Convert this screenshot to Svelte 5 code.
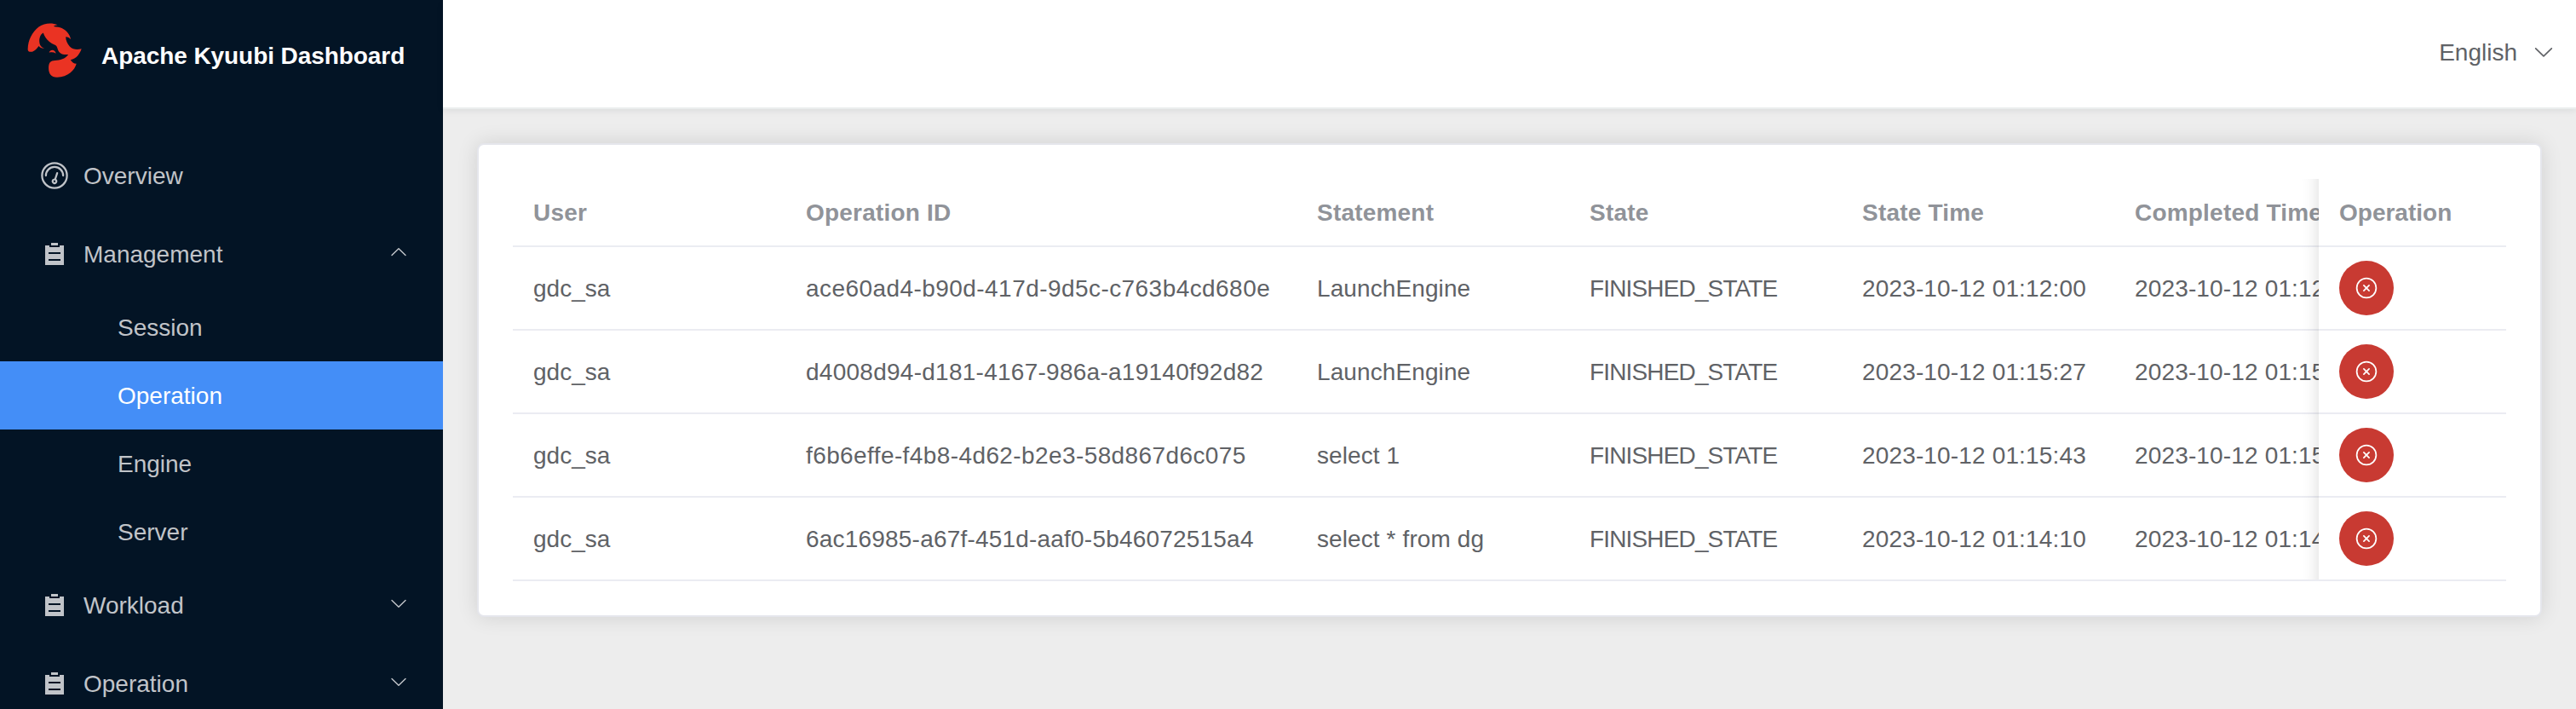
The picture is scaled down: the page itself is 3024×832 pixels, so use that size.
<script>
  const rows = [
    { user: 'gdc_sa', id: 'ace60ad4-b90d-417d-9d5c-c763b4cd680e', statement: 'LaunchEngine', state: 'FINISHED_STATE', stateTime: '2023-10-12 01:12:00', completed: '2023-10-12 01:12:00' },
    { user: 'gdc_sa', id: 'd4008d94-d181-4167-986a-a19140f92d82', statement: 'LaunchEngine', state: 'FINISHED_STATE', stateTime: '2023-10-12 01:15:27', completed: '2023-10-12 01:15:27' },
    { user: 'gdc_sa', id: 'f6b6effe-f4b8-4d62-b2e3-58d867d6c075', statement: 'select 1', state: 'FINISHED_STATE', stateTime: '2023-10-12 01:15:43', completed: '2023-10-12 01:15:43' },
    { user: 'gdc_sa', id: '6ac16985-a67f-451d-aaf0-5b46072515a4', statement: 'select * from dg', state: 'FINISHED_STATE', stateTime: '2023-10-12 01:14:10', completed: '2023-10-12 01:14:10' }
  ];
  const subItems = ['Session', 'Operation', 'Engine', 'Server'];
  const active = 'Operation';
</script>

{#snippet chevron(cls)}
  <svg class="chevron {cls}" viewBox="0 0 1024 1024"><path fill="currentColor" d="M831.872 340.864 512 652.672 192.128 340.864a30.592 30.592 0 0 0-42.752 0 29.12 29.12 0 0 0 0 41.6L489.664 714.24a32 32 0 0 0 44.672 0l340.288-331.712a29.12 29.12 0 0 0 0-41.728 30.592 30.592 0 0 0-42.752 0z"/></svg>
{/snippet}

{#snippet group(label, open)}
  <div class="item">
    <span class="icon">
      <svg class="list" viewBox="0 0 1024 1024"><path fill="currentColor" d="M704 192h160v736H160V192h160v64h384v-64zM288 512h448v-64H288v64zm0 256h448v-64H288v64zm96-576V96h256v96H384z"/></svg>
    </span>
    <span class="label">{label}</span>
    {@render chevron(open ? 'small up' : 'small')}
  </div>
{/snippet}

<div class="app">
  <aside>
    <div class="brand">
      <svg class="logo" viewBox="36 50 192 194">
        <path fill="#ea3323" d="M37 142C38 112 52 82 76 64C96 50 122 48 143 57C137 58 132 59 129 62C140 65 149 64 158 68C176 77 187 92 190 108C185 103 180 99 172 99C172 112 178 124 186 133C198 145 212 145 228 142C221 162 210 177 189 181C194 189 200 194 210 195C204 218 180 243 141 243C120 243 111 231 111 210C111 190 118 184 133 183C152 182 170 178 181 162C161 164 148 160 143 142C141 134 139 130 132 127C125 124 120 122 113 116C101 106 96 97 92 85C83 89 78 102 78 115C79 128 84 136 96 140C88 141 81 139 76 132C70 141 63 148 53 152C43 154 36 151 37 142Z"/>
        <path fill="#ea3323" d="M113 155C116 143 134 143 137 158C130 154 122 153 113 155Z"/>
      </svg>
      <h1>Apache Kyuubi Dashboard</h1>
    </div>
    <nav>
      <div class="item">
        <span class="icon">
          <svg class="gauge" viewBox="0 0 1024 1024"><path fill="currentColor" d="M512 896a384 384 0 1 0 0-768 384 384 0 0 0 0 768zm0 64a448 448 0 1 1 0-896 448 448 0 0 1 0 896z"/><path fill="currentColor" d="M192 512a320 320 0 1 1 640 0 32 32 0 1 1-64 0 256 256 0 1 0-512 0 32 32 0 0 1-64 0z"/><path fill="currentColor" d="M570.432 627.84A96 96 0 1 1 509.568 608l60.992-187.776A32 32 0 1 1 631.424 440l-60.992 187.776zM502.08 734.464a32 32 0 1 0 19.84-60.928 32 32 0 0 0-19.84 60.928z"/></svg>
        </span>
        <span class="label">Overview</span>
      </div>
      {@render group('Management', true)}
      {#each subItems as name}
        <div class="sub" class:active={name === active}>{name}</div>
      {/each}
      {@render group('Workload', false)}
      {@render group('Operation', false)}
    </nav>
  </aside>

  <div class="main">
    <header>
      <span class="lang">English</span>
      {@render chevron('large')}
    </header>
    <section class="card">
      <div class="table">
        <div class="row head">
          <div>User</div>
          <div>Operation ID</div>
          <div>Statement</div>
          <div>State</div>
          <div>State Time</div>
          <div>Completed Time</div>
          <div class="fixed">Operation</div>
        </div>
        {#each rows as r}
          <div class="row">
            <div>{r.user}</div>
            <div class="id">{r.id}</div>
            <div class="statement">{r.statement}</div>
            <div class="state">{r.state}</div>
            <div class="time">{r.stateTime}</div>
            <div class="time">{r.completed}</div>
            <div class="fixed action">
              <button aria-label="Close">
                <svg viewBox="0 0 1024 1024"><path fill="currentColor" d="m466.752 512-90.496-90.496a32 32 0 0 1 45.248-45.248L512 466.752l90.496-90.496a32 32 0 0 1 45.248 45.248L557.248 512l90.496 90.496a32 32 0 1 1-45.248 45.248L512 557.248l-90.496 90.496a32 32 0 0 1-45.248-45.248L466.752 512z"/><path fill="currentColor" d="M512 896a384 384 0 1 0 0-768 384 384 0 0 0 0 768zm0 64a448 448 0 1 1 0-896 448 448 0 0 1 0 896z"/></svg>
              </button>
            </div>
          </div>
        {/each}
      </div>
    </section>
  </div>
</div>

<style>
  :global(body) { margin: 0; overflow: hidden; }
  .app {
    display: flex;
    height: 832px;
    overflow: hidden;
    font-family: "Helvetica Neue", "Liberation Sans", Arial, sans-serif;
    font-size: 28px;
    line-height: 32px;
    color: #606266;
    background: #ededed;
    white-space: nowrap;
  }
  svg { display: block; flex: none; }
  aside {
    width: 520px;
    flex: none;
    background: #031425;
    color: #c1c4c9;
    overflow: hidden;
  }
  .brand {
    height: 160px;
    box-sizing: border-box;
    padding: 27px 0 0 32px;
    display: flex;
    align-items: flex-start;
    gap: 23px;
  }
  .logo { width: 64px; height: 64px; }
  h1 {
    margin: 23px 0 0;
    font-size: 28px;
    line-height: 32px;
    font-weight: 700;
    letter-spacing: -0.07px;
    color: #fff;
  }
  .item {
    height: 92px;
    display: flex;
    align-items: center;
    padding: 0 40px;
  }
  .icon {
    width: 48px;
    margin-right: 10px;
    display: flex;
    justify-content: center;
  }
  .gauge { width: 36px; height: 36px; }
  .list { width: 32px; height: 32px; }
  .label { flex: 1; padding-top: 2px; }
  .small { width: 24px; height: 24px; margin-bottom: 4px; }
  .large { width: 28px; height: 28px; }
  .up { transform: rotate(180deg); }
  .sub {
    height: 80px;
    box-sizing: border-box;
    padding: 25px 0 0 138px;
  }
  .active { background: #448ef7; color: #fff; }
  .main { flex: 1; min-width: 0; }
  header {
    height: 126px;
    box-sizing: border-box;
    padding: 0 24px 5px 0;
    display: flex;
    align-items: center;
    justify-content: flex-end;
    gap: 17px;
    background: #fff;
    box-shadow: 0 2px 0 #ebeeee, 0 4px 8px rgba(0, 21, 41, 0.08);
  }
  .lang { padding-top: 2px; }
  .card {
    margin: 42px 40px 0;
    padding: 40px;
    background: #fff;
    border: 2px solid #e5e6ec;
    border-radius: 8px;
    box-shadow: 0 0 24px rgba(0, 0, 0, 0.12);
  }
  .table { overflow: hidden; }
  .row {
    display: grid;
    grid-template-columns: 320px 600px 320px 320px 320px 240px 220px;
    height: 96px;
    border-bottom: 2px solid #ebecf2;
  }
  .row > div {
    display: flex;
    align-items: center;
    padding: 2px 0 0 24px;
    min-width: 0;
  }
  .head {
    height: 78px;
    font-weight: 700;
    letter-spacing: 0.2px;
    color: #909399;
  }
  .row > .fixed {
    position: relative;
    background: #fff;
    letter-spacing: 0;
  }
  .row > .action { padding-top: 0; }
  .fixed::before {
    content: "";
    position: absolute;
    top: 0;
    bottom: -2px;
    left: -20px;
    width: 20px;
    box-shadow: inset -20px 0 20px -20px rgba(0, 0, 0, 0.15);
  }
  .row:last-child .fixed::before { bottom: 0; }
  .row:nth-child(2) .id { letter-spacing: 0.44px; }
  .row:nth-child(3) .id { letter-spacing: 0.26px; }
  .row:nth-child(4) .id { letter-spacing: 0.4px; }
  .row:nth-child(5) .id { letter-spacing: 0.2px; }
  .statement { letter-spacing: 0.1px; }
  .state { letter-spacing: -0.85px; }
  .time { letter-spacing: 0.15px; }
  button {
    width: 64px;
    height: 64px;
    padding: 0;
    border: 0;
    border-radius: 50%;
    background: #c83a32;
    color: #fff;
    display: flex;
    align-items: center;
    justify-content: center;
  }
  button svg { width: 28px; height: 28px; }
</style>
